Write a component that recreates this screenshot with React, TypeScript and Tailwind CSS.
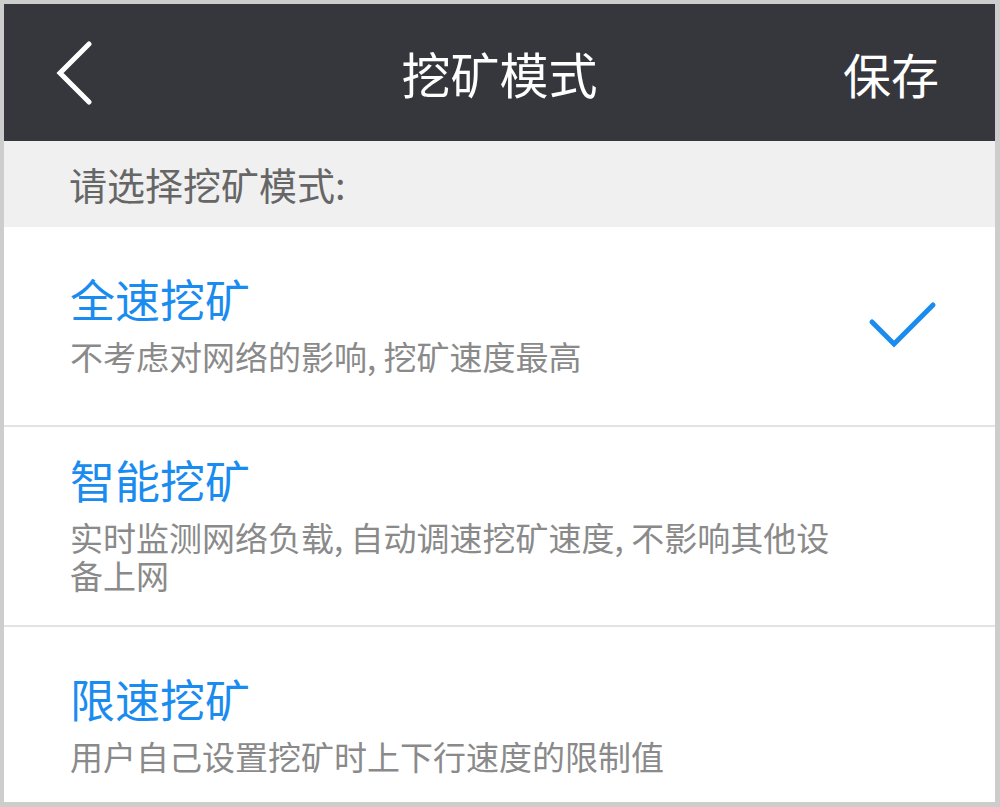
import React from 'react';

const modes = [
  { title: '全速挖矿', desc: '不考虑对网络的影响, 挖矿速度最高', checked: true },
  { title: '智能挖矿', desc: '实时监测网络负载, 自动调速挖矿速度, 不影响其他设备上网', checked: false },
  { title: '限速挖矿', desc: '用户自己设置挖矿时上下行速度的限制值', checked: false },
];

const App: React.FC = () => {
  return (
    <div
      className="w-[1000px] h-[807px] bg-[#cdcdcd] pt-[4px] pl-[4px] pr-[5px] pb-[5px] overflow-hidden"
      style={{ fontFamily: '"Noto Sans CJK SC", "Noto Sans", sans-serif' }}
    >
      <div className="h-full bg-white flex flex-col overflow-hidden">
        {/* header */}
        <header className="h-[137px] shrink-0 bg-[#36373c] flex items-center justify-between px-[52px] relative">
          <svg width="40" height="64" viewBox="0 0 40 64">
            <path d="M33 3 L4 32 L33 61" fill="none" stroke="#fff" strokeWidth="5" strokeLinecap="round" strokeLinejoin="miter" />
          </svg>
          <h1 className="absolute left-0 right-0 text-center text-white text-[49px] leading-none pointer-events-none">挖矿模式</h1>
          <span className="text-white text-[48px] leading-none mr-[4px]">保存</span>
        </header>

        <div className="h-[86px] shrink-0 bg-[#f0f0f0] flex items-center pl-[65px] text-[#666] text-[38px] leading-none">
          请选择挖矿模式:
        </div>

        {modes.map((m, i) => (
          <div
            key={m.title}
            className={`h-[198px] shrink-0 flex items-center justify-between pl-[66px] pr-[58px] ${i > 0 ? 'border-t-2 border-[#e3e3e3] h-[200px]' : ''}`}
          >
            <div className="max-w-[775px]">
              <div className="text-[#1a8cf0] text-[45px] leading-[52px] mt-[-4px]">{m.title}</div>
              <div className="text-[#8a8a8a] text-[33px] leading-[38px] mt-[12px]">{m.desc}</div>
            </div>
            {m.checked && (
              <svg width="70" height="50" viewBox="0 0 70 50" className="shrink-0">
                <path d="M5 21 L27 43 L66 4" fill="none" stroke="#1a8cf0" strokeWidth="5" strokeLinecap="round" strokeLinejoin="miter" />
              </svg>
            )}
          </div>
        ))}
      </div>
    </div>
  );
};

export default App;
